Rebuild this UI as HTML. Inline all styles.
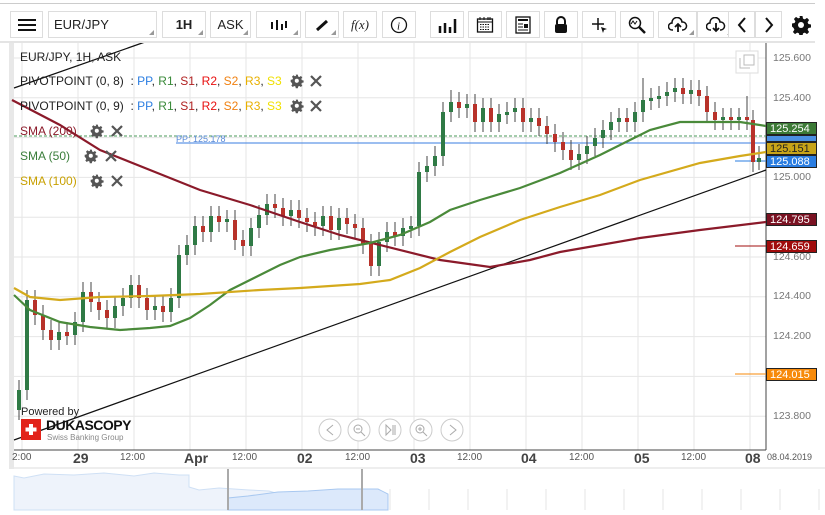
<!DOCTYPE html>
<html><head><meta charset="utf-8"><style>
*{margin:0;padding:0;box-sizing:border-box}
body{width:825px;height:515px;background:#fff;font-family:"Liberation Sans",sans-serif;position:relative;overflow:hidden}
.b{position:absolute;top:11px;height:27px;border:1px solid #ddd;background:#fff;font-size:13px;color:#222;display:flex;align-items:center;justify-content:center}
.b .t{position:absolute;right:2px;bottom:2px;width:0;height:0;border-left:5px solid transparent;border-bottom:5px solid #999}
.lg{position:absolute;left:20px;font-size:12px;color:#222;white-space:nowrap}
.lab{position:absolute;left:766px;width:51px;height:13px;font-size:11px;color:#fff;line-height:12px;padding-left:3px;border:1px solid #222}
.ax{position:absolute;left:773px;font-size:10.5px;color:#777}
.tx{position:absolute;top:452px;font-size:10px;color:#555}
.tb{position:absolute;top:450px;font-size:14px;font-weight:bold;color:#444}
</style></head><body>
<div style="position:absolute;left:0;top:3px;width:815px;height:1px;background:#ccc"></div>

<svg style="position:absolute;left:0;top:0" width="825" height="515">
<rect x="9" y="43" width="5" height="426" fill="#e8e8e8"/>
<g stroke="#e6e6e6" stroke-width="1">
<path d="M14 58H766M14 97.8H766M14 137.6H766M14 177.4H766M14 217.2H766M14 257H766M14 296.8H766M14 336.6H766M14 376.4H766M14 416.2H766"/>
<path d="M22 43V450M78 43V450M134 43V450M190 43V450M246 43V450M302 43V450M358 43V450M414 43V450M470 43V450M526 43V450M582 43V450M638 43V450M694 43V450M750 43V450"/>
</g>
<path d="M14 450H766M766 43V450" stroke="#444"/>
<path d="M14 136H766" stroke="#4a9a5a" stroke-dasharray="3 2"/>
<path d="M176 143H766" stroke="#3a7de1"/>
<path d="M735 161H766" stroke="#2a7de1"/><path d="M735 246H766" stroke="#a00c0c"/><path d="M735 374H766" stroke="#f78a0a"/>
<path stroke="#444" stroke-width="1" d="M19 380V420M27 290V400M35 290V325M43 305V340M51 320V350M59 322V350M67 322V345M75 312V345M83 282V332M91 282V312M99 292V320M107 300V328M115 296V328M123 288V316M131 275V308M139 275V308M147 288V320M155 296V320M163 296V322M171 288V322M179 245V308M187 235V265M195 216V255M203 216V242M211 206V242M219 206V232M227 210V232M235 210V250M243 230V256M251 218V256M259 205V238M267 194V225M275 194V218M283 198V226M291 200V226M299 200V228M307 208V232M315 212V236M323 206V236M331 206V240M339 208V240M347 208V234M355 214V238M363 218V254M371 234V276M379 232V276M387 222V252M395 222V246M403 218V246M411 216V238M419 162V236M427 156V182M435 146V176M443 102V166M451 90V122M459 92V118M467 94V118M475 94V132M483 98V132M491 98V132M499 104V132M507 102V124M515 98V122M523 98V132M531 108V132M539 108V136M547 116V144M555 124V152M563 132V160M571 140V170M579 144V170M587 136V164M595 128V156M603 120V148M611 112V140M619 108V132M627 108V132M635 102V132M643 78V122M651 88V110M659 86V108M667 82V106M675 78V102M683 78V104M691 80V104M699 80V106M707 86V122M715 102V130M723 108V130M731 108V130M739 108V130M747 96V130M753 110V172M759 146V170"/>
<path stroke="#2f7a45" stroke-width="4" d="M19 410V390M27 390V300M59 340V332M75 335V322M83 322V292M115 318V306M123 306V298M131 298V285M155 310V306M171 312V298M179 298V255M187 255V245M195 245V226M211 232V216M227 222V219M251 246V228M259 228V215M267 215V204M291 216V210M323 226V216M339 230V218M379 266V242M387 242V232M403 236V228M411 229V226M419 226V172M427 172V166M435 166V156M443 156V112M451 112V102M467 108V104M483 122V108M499 122V114M507 115V112M515 112V108M531 122V118M579 160V154M587 154V146M595 146V138M603 138V130M611 130V122M619 122V118M635 122V112M643 112V100M651 101V98M659 99V96M667 96V92M675 92V88M691 94V90M723 120V117M739 120V117M759 162V158"/>
<path stroke="#b8322a" stroke-width="4" d="M35 300V315M43 315V330M51 330V340M67 332V336M91 292V302M99 302V310M107 310V318M139 285V298M147 298V310M163 306V312M203 226V232M219 216V222M235 220V240M243 240V246M275 204V208M283 208V216M299 210V218M307 218V222M315 222V226M331 216V230M347 218V224M355 224V228M363 228V244M371 244V266M395 232V236M459 102V108M475 104V122M491 108V122M523 108V122M539 118V126M547 126V134M555 134V142M563 142V150M571 150V160M627 118V122M683 88V94M699 90V96M707 96V112M715 112V120M731 117V120M747 117V120M753 120V162"/>
<path d="M14 440L766 170" stroke="#111" stroke-width="1.2"/>
<path d="M14 88L145 42" stroke="#111" stroke-width="1.2"/>
<polyline fill="none" stroke="#8b1a2a" stroke-width="2.2" points="12,100 60,125 100,150 150,170 200,190 250,205 300,222 340,235 380,245 440,260 490,267 530,260 560,252 640,238 700,230 766,222"/>
<polyline fill="none" stroke="#4a8a3a" stroke-width="2.2" points="14,295 30,310 60,322 90,327 120,330 150,328 170,326 190,318 210,305 230,290 260,275 280,265 300,257 330,250 370,243 400,235 430,222 450,210 480,200 520,188 560,173 600,155 630,140 650,130 680,122 740,122 766,126"/>
<polyline fill="none" stroke="#d4aa1c" stroke-width="2.2" points="14,288 30,297 60,300 100,297 150,296 200,294 260,290 300,288 360,284 390,280 420,268 450,252 480,237 520,220 560,207 600,195 640,180 700,163 740,156 766,152"/>
<g fill="#fff" stroke="#ccc"><circle cx="330" cy="430" r="11"/><circle cx="359" cy="430" r="11"/><circle cx="390" cy="430" r="11"/><circle cx="421" cy="430" r="11"/><circle cx="452" cy="430" r="11"/></g>
<g fill="none" stroke="#aaa"><path d="M333 425l-6 5 6 5"/><path d="M450 425l6 5-6 5"/><circle cx="358" cy="429" r="4"/><path d="M361 432l4 4M356 429h4"/><path d="M386 425l5 5-5 5zM393 425v10M395 425v10"/><circle cx="420" cy="429" r="4"/><path d="M423 432l4 4M418 429h4M420 427v4"/></g>
<rect x="736" y="51" width="22" height="22" fill="#fff" stroke="#ddd"/><path d="M740 58v10h10M744 55h10v10h-10z" fill="none" stroke="#bbb"/>
<path d="M14 468H825" stroke="#ddd"/>
<path d="M14 510V476l10 2 20-4 30 1 30-2 30 3 20-3 25 2 10 0v12l10 3 20-2 30 2 20 1 10 3 8 2V510z" fill="#eef3fb" stroke="#cfe0f5"/>
<path d="M228 510V498l20-2 30-4 30-1 30-2 40 0 10 5V510z" fill="#dce9fb" stroke="#a8c8f0"/>
<path d="M228 469V510M362 469V510" stroke="#aaa" stroke-width="2"/>
<path d="M390 489V510M429 489V510M468 489V510M507 489V510M546 489V510M585 489V510M624 489V510M663 489V510M702 489V510M741 489V510M780 489V510M819 489V510" stroke="#e4e4e4"/>
<!-- legend icons -->
<g fill="#555">
<path transform="translate(290 74) scale(.68)" d="M8.5 1h3l.5 2.6 1.8.8 2.2-1.5 2.1 2.1-1.5 2.2.8 1.8 2.6.5v3l-2.6.5-.8 1.8 1.5 2.2-2.1 2.1-2.2-1.5-1.8.8-.5 2.6h-3l-.5-2.6-1.8-.8-2.2 1.5-2.1-2.1 1.5-2.2-.8-1.8L1 11.5v-3l2.6-.5.8-1.8-1.5-2.2 2.1-2.1 2.2 1.5 1.8-.8zM10 7a3 3 0 1 0 0 6 3 3 0 1 0 0-6z" fill-rule="evenodd"/>
<path transform="translate(290 99) scale(.68)" d="M8.5 1h3l.5 2.6 1.8.8 2.2-1.5 2.1 2.1-1.5 2.2.8 1.8 2.6.5v3l-2.6.5-.8 1.8 1.5 2.2-2.1 2.1-2.2-1.5-1.8.8-.5 2.6h-3l-.5-2.6-1.8-.8-2.2 1.5-2.1-2.1 1.5-2.2-.8-1.8L1 11.5v-3l2.6-.5.8-1.8-1.5-2.2 2.1-2.1 2.2 1.5 1.8-.8zM10 7a3 3 0 1 0 0 6 3 3 0 1 0 0-6z" fill-rule="evenodd"/>
<path transform="translate(90 124) scale(.68)" d="M8.5 1h3l.5 2.6 1.8.8 2.2-1.5 2.1 2.1-1.5 2.2.8 1.8 2.6.5v3l-2.6.5-.8 1.8 1.5 2.2-2.1 2.1-2.2-1.5-1.8.8-.5 2.6h-3l-.5-2.6-1.8-.8-2.2 1.5-2.1-2.1 1.5-2.2-.8-1.8L1 11.5v-3l2.6-.5.8-1.8-1.5-2.2 2.1-2.1 2.2 1.5 1.8-.8zM10 7a3 3 0 1 0 0 6 3 3 0 1 0 0-6z" fill-rule="evenodd"/>
<path transform="translate(84 149) scale(.68)" d="M8.5 1h3l.5 2.6 1.8.8 2.2-1.5 2.1 2.1-1.5 2.2.8 1.8 2.6.5v3l-2.6.5-.8 1.8 1.5 2.2-2.1 2.1-2.2-1.5-1.8.8-.5 2.6h-3l-.5-2.6-1.8-.8-2.2 1.5-2.1-2.1 1.5-2.2-.8-1.8L1 11.5v-3l2.6-.5.8-1.8-1.5-2.2 2.1-2.1 2.2 1.5 1.8-.8zM10 7a3 3 0 1 0 0 6 3 3 0 1 0 0-6z" fill-rule="evenodd"/>
<path transform="translate(90 174) scale(.68)" d="M8.5 1h3l.5 2.6 1.8.8 2.2-1.5 2.1 2.1-1.5 2.2.8 1.8 2.6.5v3l-2.6.5-.8 1.8 1.5 2.2-2.1 2.1-2.2-1.5-1.8.8-.5 2.6h-3l-.5-2.6-1.8-.8-2.2 1.5-2.1-2.1 1.5-2.2-.8-1.8L1 11.5v-3l2.6-.5.8-1.8-1.5-2.2 2.1-2.1 2.2 1.5 1.8-.8zM10 7a3 3 0 1 0 0 6 3 3 0 1 0 0-6z" fill-rule="evenodd"/>
</g>
<g stroke="#555" stroke-width="2.2"><path d="M311 76l10 10M321 76l-10 10M311 101l10 10M321 101l-10 10M112 126l10 10M122 126l-10 10M106 151l10 10M116 151l-10 10M112 176l10 10M122 176l-10 10"/></g>
</svg>

<div class="b" style="left:10px;width:33px"><svg width="18" height="14"><path d="M0 2h18M0 7h18M0 12h18" stroke="#111" stroke-width="2"/></svg></div>
<div class="b" style="left:48px;width:109px;justify-content:flex-start;padding-left:5px">EUR/JPY<span class="t"></span></div>
<div class="b" style="left:162px;width:44px;font-weight:bold">1H<span class="t"></span></div>
<div class="b" style="left:210px;width:41px">ASK<span class="t"></span></div>
<div class="b" style="left:256px;width:45px"><svg width="18" height="14"><path d="M2 4v7M7 2v10M12 6v6M16 3v7" stroke="#111" stroke-width="2"/></svg><span class="t"></span></div>
<div class="b" style="left:305px;width:34px"><svg width="14" height="14"><path d="M2 12L12 3" stroke="#111" stroke-width="3"/></svg><span class="t"></span></div>
<div class="b" style="left:343px;width:34px;font-family:'Liberation Serif',serif;font-style:italic">f(x)</div>
<div class="b" style="left:382px;width:34px"><svg width="18" height="18"><circle cx="9" cy="9" r="7.5" fill="none" stroke="#111" stroke-width="1.3"/><text x="7" y="13.5" font-size="11" font-style="italic" font-family="Liberation Serif" fill="#111">i</text></svg></div>
<div class="b" style="left:430px;width:34px"><svg width="20" height="16"><path d="M3 16v-7M8 16v-10M13 16v-6M18 16v-14" stroke="#111" stroke-width="2.5"/></svg></div>
<div class="b" style="left:468px;width:34px"><svg width="18" height="18"><rect x="1.5" y="3" width="15" height="13" fill="none" stroke="#111" stroke-width="1.3"/><path d="M1.5 6h15M4 1v3M8 1v3M12 1v3M14 1v3" stroke="#111"/><path d="M4 8.5h10M4 11h10M4 13.5h10" stroke="#111" stroke-dasharray="1.5 1"/></svg></div>
<div class="b" style="left:506px;width:34px"><svg width="16" height="18"><rect x="1" y="1" width="14" height="16" fill="none" stroke="#111" stroke-width="1.3"/><path d="M3 4h10" stroke="#111" stroke-width="2"/><path d="M3 8h5M3 11h5M3 14h10" stroke="#111"/><rect x="9" y="8" width="4" height="4" fill="#111"/></svg></div>
<div class="b" style="left:544px;width:34px"><svg width="14" height="18"><path d="M3 8V5a4 4 0 0 1 8 0v3" fill="none" stroke="#111" stroke-width="2"/><rect x="1" y="8" width="12" height="9" rx="2" fill="#111"/></svg></div>
<div class="b" style="left:582px;width:34px"><svg width="18" height="18"><path d="M8 2v12M2 8h12" stroke="#111" stroke-width="1.5"/><path d="M11 11l6 2-3 1-1 3z" fill="#111"/></svg></div>
<div class="b" style="left:620px;width:34px"><svg width="18" height="18"><circle cx="7" cy="7" r="5.5" fill="none" stroke="#111" stroke-width="1.5"/><path d="M11 11l6 6" stroke="#111" stroke-width="2.5"/><path d="M3 8l2-3 2 3 2-3" fill="none" stroke="#111"/></svg></div>
<div class="b" style="left:658px;width:39px"><svg width="20" height="16"><path d="M5 13H4a3.5 3.5 0 0 1 0-7 5 5 0 0 1 10-1 4 4 0 0 1 1 8h-1" fill="none" stroke="#111" stroke-width="1.5"/><path d="M10 15V7M7 10l3-3 3 3" fill="none" stroke="#111" stroke-width="1.8"/></svg><span class="t"></span></div>
<div class="b" style="left:697px;width:38px"><svg width="20" height="16"><path d="M5 13H4a3.5 3.5 0 0 1 0-7 5 5 0 0 1 10-1 4 4 0 0 1 1 8h-1" fill="none" stroke="#111" stroke-width="1.5"/><path d="M10 6v8M7 11l3 3 3-3" fill="none" stroke="#111" stroke-width="1.8"/></svg><span class="t"></span></div>
<div class="b" style="left:728px;width:27px"><svg width="10" height="16"><path d="M8 1L2 8l6 7" fill="none" stroke="#111" stroke-width="2"/></svg></div>
<div class="b" style="left:755px;width:27px"><svg width="10" height="16"><path d="M2 1l6 7-6 7" fill="none" stroke="#111" stroke-width="2"/></svg></div>
<div style="position:absolute;left:791px;top:15px"><svg width="20" height="20" viewBox="0 0 20 20"><path fill="#111" d="M8.5 1h3l.5 2.6 1.8.8 2.2-1.5 2.1 2.1-1.5 2.2.8 1.8 2.6.5v3l-2.6.5-.8 1.8 1.5 2.2-2.1 2.1-2.2-1.5-1.8.8-.5 2.6h-3l-.5-2.6-1.8-.8-2.2 1.5-2.1-2.1 1.5-2.2-.8-1.8L1 11.5v-3l2.6-.5.8-1.8-1.5-2.2 2.1-2.1 2.2 1.5 1.8-.8z"/><circle cx="10" cy="10" r="3" fill="#fff"/></svg></div>
<div style="position:absolute;left:0;top:41px;width:815px;height:2px;background:#e4e4e4"></div>

<div class="lg" style="top:50px">EUR/JPY, 1H, ASK</div>
<div class="lg" style="top:74px">PIVOTPOINT (0, 8) &nbsp;: <span style="color:#2a7de1">PP</span>, <span style="color:#3a8a3a">R1</span>, <span style="color:#b02020">S1</span>, <span style="color:#e81010">R2</span>, <span style="color:#f08010">S2</span>, <span style="color:#e8b000">R3</span>, <span style="color:#f0e000">S3</span></div>
<div class="lg" style="top:99px">PIVOTPOINT (0, 9) &nbsp;: <span style="color:#2a7de1">PP</span>, <span style="color:#3a8a3a">R1</span>, <span style="color:#b02020">S1</span>, <span style="color:#e81010">R2</span>, <span style="color:#f08010">S2</span>, <span style="color:#e8b000">R3</span>, <span style="color:#f0e000">S3</span></div>
<div class="lg" style="top:124px;color:#8b1a2a">SMA (200)</div>
<div class="lg" style="top:149px;color:#3a7d3a">SMA (50)</div>
<div class="lg" style="top:174px;color:#c8a000">SMA (100)</div>
<div style="position:absolute;left:176px;top:134px;font-size:9px;color:#5a8ad8">PP: 125.178</div>

<div class="ax" style="top:52px">125.600</div>
<div class="ax" style="top:92px">125.400</div>
<div class="ax" style="top:171px">125.000</div>
<div class="ax" style="top:251px">124.600</div>
<div class="ax" style="top:290px">124.400</div>
<div class="ax" style="top:330px">124.200</div>
<div class="ax" style="top:410px">123.800</div>
<div class="lab" style="top:122px;background:#3c7a36">125.254</div>
<div class="lab" style="top:135px;height:7px;background:#4a90e2"></div>
<div class="lab" style="top:142px;background:#c8a418;color:#222">125.151</div>
<div class="lab" style="top:155px;background:#2a7de1">125.088</div>
<div class="lab" style="top:213px;background:#7a1222">124.795</div>
<div class="lab" style="top:240px;background:#a00c0c">124.659</div>
<div class="lab" style="top:368px;background:#f78a0a">124.015</div>

<div style="position:absolute;left:21px;top:406px;font-size:11px;color:#222">Powered by</div>
<div style="position:absolute;left:21px;top:419px;width:20px;height:21px;background:#e2231a"><svg width="20" height="21"><path d="M10 5v11M4.5 10.5h11" stroke="#fff" stroke-width="4"/></svg></div>
<div style="position:absolute;left:46px;top:417px;font-size:14px;font-weight:bold;color:#111;letter-spacing:-0.5px">DUKASCOPY</div>
<div style="position:absolute;left:47px;top:433px;font-size:8px;color:#888">Swiss Banking Group</div>

<div class="tx" style="left:12px">2:00</div>
<div class="tb" style="left:73px">29</div>
<div class="tx" style="left:120px">12:00</div>
<div class="tb" style="left:184px">Apr</div>
<div class="tx" style="left:232px">12:00</div>
<div class="tb" style="left:297px">02</div>
<div class="tx" style="left:345px">12:00</div>
<div class="tb" style="left:410px">03</div>
<div class="tx" style="left:457px">12:00</div>
<div class="tb" style="left:521px">04</div>
<div class="tx" style="left:569px">12:00</div>
<div class="tb" style="left:634px">05</div>
<div class="tx" style="left:681px">12:00</div>
<div class="tb" style="left:745px">08</div>
<div class="tx" style="left:767px;font-size:9px">08.04.2019</div>
</body></html>
